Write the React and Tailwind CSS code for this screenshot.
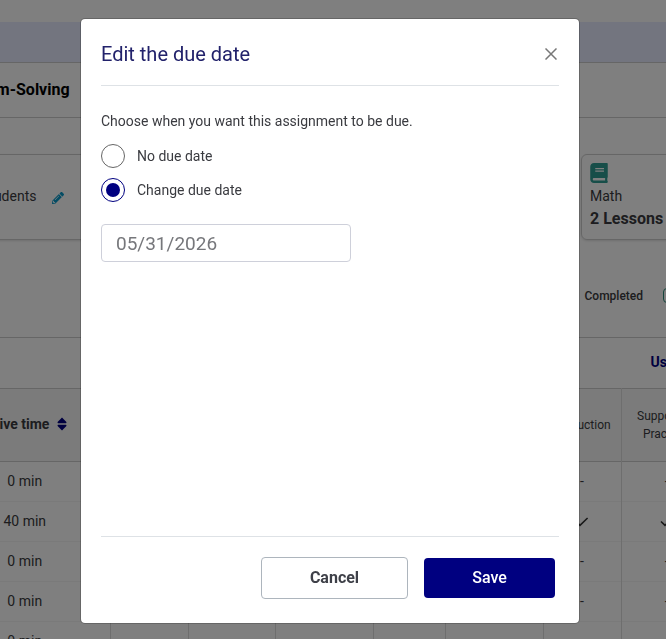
import { useState } from 'react';
import { FaBook, FaPencilAlt } from 'react-icons/fa';

const rows = [
    { time: '0 min', done: false },
    { time: '40 min', done: true },
    { time: '0 min', done: false },
    { time: '0 min', done: false },
    { time: '0 min', done: false },
];

function SortIcon() {
    return (
        <svg width="10" height="14" viewBox="0 0 10 14" className="fill-[#000080]">
            <path d="M5 0.6 L9.4 5 Q9.8 6.2 8.8 6.3 H1.2 Q0.2 6.2 0.6 5 Z" />
            <path d="M5 13.4 L9.4 9 Q9.8 7.8 8.8 7.7 H1.2 Q0.2 7.8 0.6 9 Z" />
        </svg>
    );
}

function Check() {
    return (
        <svg width="14" height="10" viewBox="0 0 14 10" className="inline-block fill-none stroke-[#333]" strokeWidth="1.6">
            <path d="M1 4.5 L5 8.4 L12.6 1" />
        </svg>
    );
}

function Mark({ done }) {
    return done ? <Check /> : '-';
}

function AssignmentPage() {
    return (
        <div className="min-h-screen bg-white">
            <div className="h-[22px]" />
            <div className="h-[41px] border-b border-[#ccc] bg-[#e6ebff]" />
            <div className="flex h-[55px] items-center border-b border-[#ccc]">
                <h1 className="-ml-[51px] text-base font-bold text-black">Problem-Solving</h1>
            </div>

            <div className="flex gap-4 pt-9">
                <section className="-ml-5 flex h-[86px] flex-1 items-center gap-4 rounded-md border border-[#ccc] shadow">
                    <span className="pb-0.5 text-sm">Students</span>
                    <FaPencilAlt className="mt-0.5 h-3 w-3 text-[#0898c8]" />
                </section>
                <section className="-mr-[75px] h-[86px] w-40 rounded-md border border-[#ccc] p-2 shadow">
                    <FaBook className="mb-0.5 h-5 w-[18px] text-[#2f9c93]" />
                    <p className="text-sm leading-[22px]">Math</p>
                    <p className="text-base leading-6 font-bold">2 Lessons</p>
                </section>
            </div>

            <div className="-mr-3 flex h-[98px] items-center justify-end gap-5 border-b border-[#ccc] pt-3.5">
                <span className="text-xs font-medium">Completed</span>
                <span className="h-[15px] w-[15px] rounded border border-[#2a8a78]" />
            </div>
            <div className="flex h-[50px] items-center justify-end pb-0.5">
                <h2 className="-mr-6 text-sm font-bold text-[#000080]">Usage</h2>
            </div>

            <table className="-ml-[60px] w-[calc(100%+106px)] table-fixed border-collapse text-center">
                <colgroup>
                    <col className="w-[170px]" />
                    <col className="w-[78px]" />
                    <col className="w-[87px]" />
                    <col />
                    <col className="w-[72px]" />
                    <col className="w-[98px]" />
                    <col className="w-[78px]" />
                    <col className="w-[91px]" />
                </colgroup>
                <thead>
                    <tr className="h-[73px] border-y border-[#ccc] bg-[#f7f7f7]">
                        <th className="border-r border-[#ddd] pr-1 pb-0.5 text-sm font-bold">
                            <div className="flex items-center justify-center gap-2">
                                Active time
                                <SortIcon />
                            </div>
                        </th>
                        <th className="border-r border-[#ddd]" />
                        <th className="border-r border-[#ddd]" />
                        <th className="border-r border-[#ddd]" />
                        <th className="border-r border-[#ddd]" />
                        <th className="border-r border-[#ddd]" />
                        <th className="border-r border-[#ddd] text-xs font-normal">Instruction</th>
                        <th className="pr-1 text-xs leading-[18px] font-normal">
                            Supported Practice
                        </th>
                    </tr>
                </thead>
                <tbody className="text-sm">
                    {rows.map((row, index) => (
                        <tr key={index} className="h-10 border-b border-[#f4f4f4]">
                            <td className="border-r border-[#ddd] pb-0.5">{row.time}</td>
                            <td className="border-r border-[#ddd]" />
                            <td className="border-r border-[#ddd]" />
                            <td className="border-r border-[#ddd]" />
                            <td className="border-r border-[#ddd]" />
                            <td className="border-r border-[#ddd]" />
                            <td className="border-r border-[#ddd] pb-0.5"><Mark done={row.done} /></td>
                            <td className="pb-0.5"><Mark done={row.done} /></td>
                        </tr>
                    ))}
                </tbody>
            </table>
        </div>
    );
}

function DueDateModal() {
    const [choice, setChoice] = useState('change');
    const [date, setDate] = useState('05/31/2026');
    const radio =
        'h-6 w-6 appearance-none rounded-full border border-[#666] bg-clip-content p-1 checked:border-[#000080] checked:bg-[#000080]';

    return (
        <div className="fixed inset-0 flex items-start justify-center bg-black/50 pt-[18px] pr-1.5">
            <div
                role="dialog"
                aria-modal="true"
                aria-labelledby="due-title"
                className="w-full max-w-[500px] rounded-[5px] border border-black/20 bg-white bg-clip-padding px-5 text-sm"
            >
                <header className="flex h-[67px] items-center justify-between border-b border-[#dee2e6] pt-1">
                    <h2 id="due-title" className="text-xl text-[#22226b]">Edit the due date</h2>
                    <button type="button" aria-label="Close" className="p-0.5">
                        <svg width="12" height="12" viewBox="0 0 12 12" className="stroke-[#777]" strokeWidth="1.5">
                            <path d="M0.5 0.5 L11.5 11.5 M11.5 0.5 L0.5 11.5" />
                        </svg>
                    </button>
                </header>

                <div className="min-h-[450px] pt-6">
                    <p className="mb-3 leading-[22px]">Choose when you want this assignment to be due.</p>
                    <div className="flex flex-col gap-2.5">
                        <label className="flex items-center gap-3">
                            <input
                                type="radio"
                                name="due"
                                className={radio}
                                checked={choice === 'none'}
                                onChange={() => setChoice('none')}
                            />
                            No due date
                        </label>
                        <label className="flex items-center gap-3">
                            <input
                                type="radio"
                                name="due"
                                className={radio}
                                checked={choice === 'change'}
                                onChange={() => setChoice('change')}
                            />
                            Change due date
                        </label>
                    </div>
                    <input
                        type="text"
                        aria-label="Due date"
                        className="mt-[22px] block h-[38px] w-[250px] rounded border border-[#ced0da] px-3.5 text-[19px] text-[#76777b]"
                        value={date}
                        onChange={(e) => setDate(e.target.value)}
                    />
                </div>

                <footer className="flex items-center justify-end gap-4 border-t border-[#dee2e6] pt-5 pr-1 pb-6">
                    <button type="button" className="h-[42px] w-[147px] rounded border border-[#adb5bd] text-base font-bold text-[#3e4048]">
                        Cancel
                    </button>
                    <button type="button" className="h-10 w-[131px] rounded bg-[#000080] text-base font-medium text-white">
                        Save
                    </button>
                </footer>
            </div>
        </div>
    );
}

export default function App() {
    return (
        <div className="h-screen overflow-hidden font-[Roboto,sans-serif] text-[#3a3b40]">
            <AssignmentPage />
            <DueDateModal />
        </div>
    );
}
